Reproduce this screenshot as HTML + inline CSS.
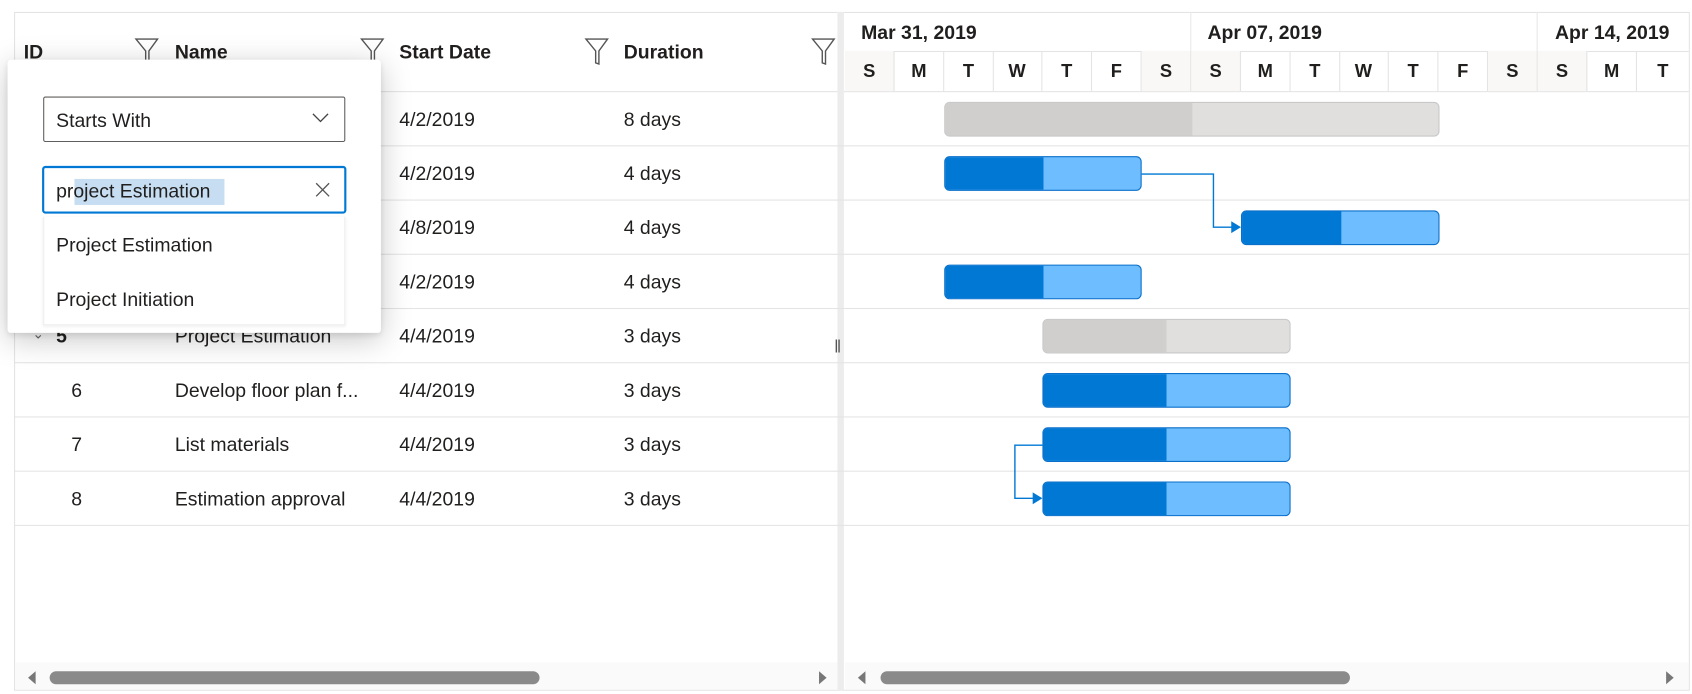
<!DOCTYPE html>
<html><head><meta charset="utf-8"><style>
*{box-sizing:border-box;margin:0;padding:0}
body{width:1692px;height:694px;overflow:hidden;background:#fff;font-family:"Segoe UI","Liberation Sans",sans-serif;color:#201f1e}
#w{position:absolute;left:0;top:0;width:1568px;height:640px;transform:scale(1.0791,1.0844);transform-origin:0 0}
.a{position:absolute}
.t{position:absolute;font-size:18px;white-space:nowrap;margin-top:2px}
.h{font-weight:600}
.hl{position:absolute;height:1px;background:#e4e4e4}
.vl{position:absolute;width:1px;background:#e8e8e8}
.day{position:absolute;top:47px;height:37px;width:46px;border-right:1px solid #e4e4e4;text-align:center;font-weight:700;font-size:17px;line-height:37px}
.bar{position:absolute;height:32px;border-radius:5px;overflow:hidden;border:1px solid #0a6fc9;background:#6ebeff}
.bar i{position:absolute;left:0;top:0;bottom:0;background:#0078d4}
.sb{border-color:#c8c8c8;background:#e0dfde}.sb i{background:#d0cfce}
</style></head><body><div id="w">
<div class="a" style="left:13px;top:11px;width:1553px;height:626px;border:1px solid #e4e4e4"></div>
<div class="hl" style="left:13px;top:84px;width:1552px"></div>
<div class="a" style="left:776px;top:11px;width:6px;height:626px;background:#ececec"></div>
<div class="t" style="left:773px;top:310px;font-size:16px;color:#555">‖</div>
<div class="hl" style="left:13px;top:134px;width:1552px"></div>
<div class="hl" style="left:13px;top:184px;width:1552px"></div>
<div class="hl" style="left:13px;top:234px;width:1552px"></div>
<div class="hl" style="left:13px;top:284px;width:1552px"></div>
<div class="hl" style="left:13px;top:334px;width:1552px"></div>
<div class="hl" style="left:13px;top:384px;width:1552px"></div>
<div class="hl" style="left:13px;top:434px;width:1552px"></div>
<div class="hl" style="left:13px;top:484px;width:1552px"></div>
<div class="t h" style="left:22px;top:36px">ID</div>
<div class="t h" style="left:162px;top:36px">Name</div>
<div class="t h" style="left:370px;top:36px">Start Date</div>
<div class="t h" style="left:578px;top:36px">Duration</div>
<svg class="a" style="left:124px;top:34px" width="24" height="28"><path d="M2 2H22L14 13V25L11 24V13Z" fill="none" stroke="#555" stroke-width="1.3"/></svg>
<svg class="a" style="left:333px;top:34px" width="24" height="28"><path d="M2 2H22L14 13V25L11 24V13Z" fill="none" stroke="#555" stroke-width="1.3"/></svg>
<svg class="a" style="left:541px;top:34px" width="24" height="28"><path d="M2 2H22L14 13V25L11 24V13Z" fill="none" stroke="#555" stroke-width="1.3"/></svg>
<svg class="a" style="left:751px;top:34px" width="24" height="28"><path d="M2 2H22L14 13V25L11 24V13Z" fill="none" stroke="#555" stroke-width="1.3"/></svg>
<div class="t" style="left:370px;top:98px">4/2/2019</div><div class="t" style="left:578px;top:98px">8 days</div>
<div class="t" style="left:370px;top:148px">4/2/2019</div><div class="t" style="left:578px;top:148px">4 days</div>
<div class="t" style="left:370px;top:198px">4/8/2019</div><div class="t" style="left:578px;top:198px">4 days</div>
<div class="t" style="left:370px;top:248px">4/2/2019</div><div class="t" style="left:578px;top:248px">4 days</div>
<div class="t" style="left:30px;top:298px;font-size:13px;color:#666">⌄</div>
<div class="t h" style="left:52px;top:298px">5</div>
<div class="t" style="left:162px;top:298px">Project Estimation</div>
<div class="t" style="left:370px;top:298px">4/4/2019</div><div class="t" style="left:578px;top:298px">3 days</div>
<div class="t" style="left:66px;top:348px">6</div><div class="t" style="left:162px;top:348px">Develop floor plan f...</div>
<div class="t" style="left:370px;top:348px">4/4/2019</div><div class="t" style="left:578px;top:348px">3 days</div>
<div class="t" style="left:66px;top:398px">7</div><div class="t" style="left:162px;top:398px">List materials</div>
<div class="t" style="left:370px;top:398px">4/4/2019</div><div class="t" style="left:578px;top:398px">3 days</div>
<div class="t" style="left:66px;top:448px">8</div><div class="t" style="left:162px;top:448px">Estimation approval</div>
<div class="t" style="left:370px;top:448px">4/4/2019</div><div class="t" style="left:578px;top:448px">3 days</div>
<div class="hl" style="left:783px;top:47px;width:782px"></div>
<div class="vl" style="left:1103px;top:11px;height:36px"></div>
<div class="vl" style="left:1424px;top:11px;height:36px"></div>
<div class="t h" style="left:798px;top:18px;font-weight:700;font-size:18px">Mar 31, 2019</div>
<div class="t h" style="left:1119px;top:18px;font-weight:700;font-size:18px">Apr 07, 2019</div>
<div class="t h" style="left:1441px;top:18px;font-weight:700;font-size:18px">Apr 14, 2019</div>
<div class="day" style="left:783px;background:#f9f8f7">S</div><div class="day" style="left:829px">M</div><div class="day" style="left:875px">T</div><div class="day" style="left:920px">W</div><div class="day" style="left:966px">T</div><div class="day" style="left:1012px">F</div><div class="day" style="left:1058px;background:#f9f8f7">S</div>
<div class="day" style="left:1104px;background:#f9f8f7">S</div><div class="day" style="left:1150px">M</div><div class="day" style="left:1196px">T</div><div class="day" style="left:1241px">W</div><div class="day" style="left:1287px">T</div><div class="day" style="left:1333px">F</div><div class="day" style="left:1379px;background:#f9f8f7">S</div>
<div class="day" style="left:1425px;background:#f9f8f7">S</div><div class="day" style="left:1471px">M</div><div class="day" style="left:1517px;width:48px;border-right:none">T</div>
<div class="bar sb" style="left:875px;top:94px;width:459px"><i style="width:229px"></i></div>
<div class="bar" style="left:875px;top:144px;width:183px"><i style="width:91px"></i></div>
<div class="bar" style="left:1150px;top:194px;width:184px"><i style="width:92px"></i></div>
<div class="bar" style="left:875px;top:244px;width:183px"><i style="width:91px"></i></div>
<div class="bar sb" style="left:966px;top:294px;width:230px"><i style="width:114px"></i></div>
<div class="bar" style="left:966px;top:344px;width:230px"><i style="width:114px"></i></div>
<div class="bar" style="left:966px;top:394px;width:230px"><i style="width:114px"></i></div>
<div class="bar" style="left:966px;top:444px;width:230px"><i style="width:114px"></i></div>
<svg class="a" style="left:0;top:0" width="1568" height="640">
<path d="M1058 160.5H1124.5V209.5H1142" fill="none" stroke="#0078d4" stroke-width="1.3"/>
<path d="M1141 204L1150 209.5L1141 215Z" fill="#0078d4"/>
<path d="M966 410.5H940.5V459.5H958" fill="none" stroke="#0078d4" stroke-width="1.3"/>
<path d="M957 454L966 459.5L957 465Z" fill="#0078d4"/>
</svg>
<div class="a" style="left:14px;top:611px;width:762px;height:25px;background:#fafafa"></div>
<div class="a" style="left:783px;top:611px;width:782px;height:25px;background:#fafafa"></div>
<div class="a" style="left:46px;top:619px;width:454px;height:12px;border-radius:6px;background:#8a8a8a"></div>
<div class="a" style="left:816px;top:619px;width:435px;height:12px;border-radius:6px;background:#8a8a8a"></div>
<svg class="a" style="left:0;top:615px" width="1568" height="20">
<path d="M33 4L26 10L33 16Z" fill="#777"/><path d="M759 4L766 10L759 16Z" fill="#777"/>
<path d="M802 4L795 10L802 16Z" fill="#777"/><path d="M1544 4L1551 10L1544 16Z" fill="#777"/>
</svg>
<div class="a" style="left:7px;top:55px;width:346px;height:252px;background:#fff;border-radius:3px;box-shadow:0 6px 28px rgba(0,0,0,.22),0 2px 6px rgba(0,0,0,.1)"></div>
<div class="a" style="left:40px;top:89px;width:280px;height:42px;border:1px solid #605e5c;border-radius:2px"></div>
<div class="t" style="left:52px;top:99px">Starts With</div>
<svg class="a" style="left:289px;top:103px" width="16" height="12"><path d="M1 2L8 9L15 2" fill="none" stroke="#444" stroke-width="1.2"/></svg>
<div class="a" style="left:39px;top:153px;width:282px;height:44px;border:2px solid #0078d4;border-radius:3px"></div>
<div class="a" style="left:69px;top:165px;width:139px;height:24px;background:#c7def2"></div>
<div class="t" style="left:52px;top:164px">project Estimation</div>
<svg class="a" style="left:292px;top:168px" width="14" height="14"><path d="M1 1L13 13M13 1L1 13" stroke="#555" stroke-width="1.2"/></svg>
<div class="a" style="left:40px;top:200px;width:280px;height:100px;border:1px solid #eee;border-top:none;box-shadow:0 1px 3px rgba(0,0,0,.08)"></div>
<div class="t" style="left:52px;top:214px">Project Estimation</div>
<div class="t" style="left:52px;top:264px">Project Initiation</div>
</div></body></html>
